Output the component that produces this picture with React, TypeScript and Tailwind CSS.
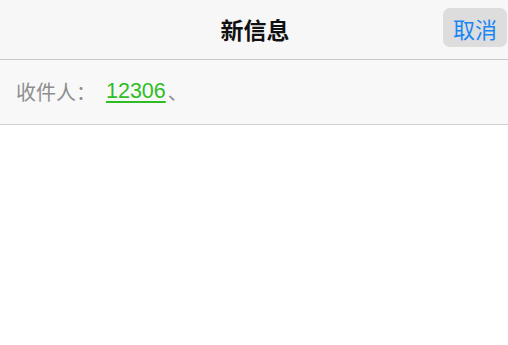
export default function App() {
  return (
    <div
      className="w-[508px] h-[345px] bg-white flex flex-col overflow-hidden"
      style={{ fontFamily: '"Noto Sans CJK SC", "Noto Sans", sans-serif' }}
    >
      <header className="relative h-[60px] bg-[#f7f7f7] border-b border-[#c9c9c9] flex items-center justify-center shrink-0">
        <h1 className="text-[23px] leading-none font-semibold text-[#111] ml-[2px]">新信息</h1>
        <button className="absolute right-[1px] top-[8px] h-[39px] w-[64px] rounded-[7px] bg-[#dddddd] text-[22px] leading-none text-[#1a86f5] flex items-center justify-center">
          取消
        </button>
      </header>

      <div className="h-[65px] bg-[#f8f8f8] border-b border-[#cfcfcf] flex items-center pl-[16px] shrink-0">
        <span className="text-[20px] leading-none text-[#8e8e8e]">收件人：</span>
        <span
          className="ml-[10px] text-[21.5px] leading-none text-[#2ebd25] underline underline-offset-[3px] decoration-[1.5px]"
          style={{ fontFamily: '"Liberation Sans", Arial, sans-serif' }}
        >
          12306
        </span>
        <span className="ml-[2px] text-[20px] leading-none text-[#8e8e8e]">、</span>
      </div>

      <main className="flex-1 bg-white" />
    </div>
  );
}
